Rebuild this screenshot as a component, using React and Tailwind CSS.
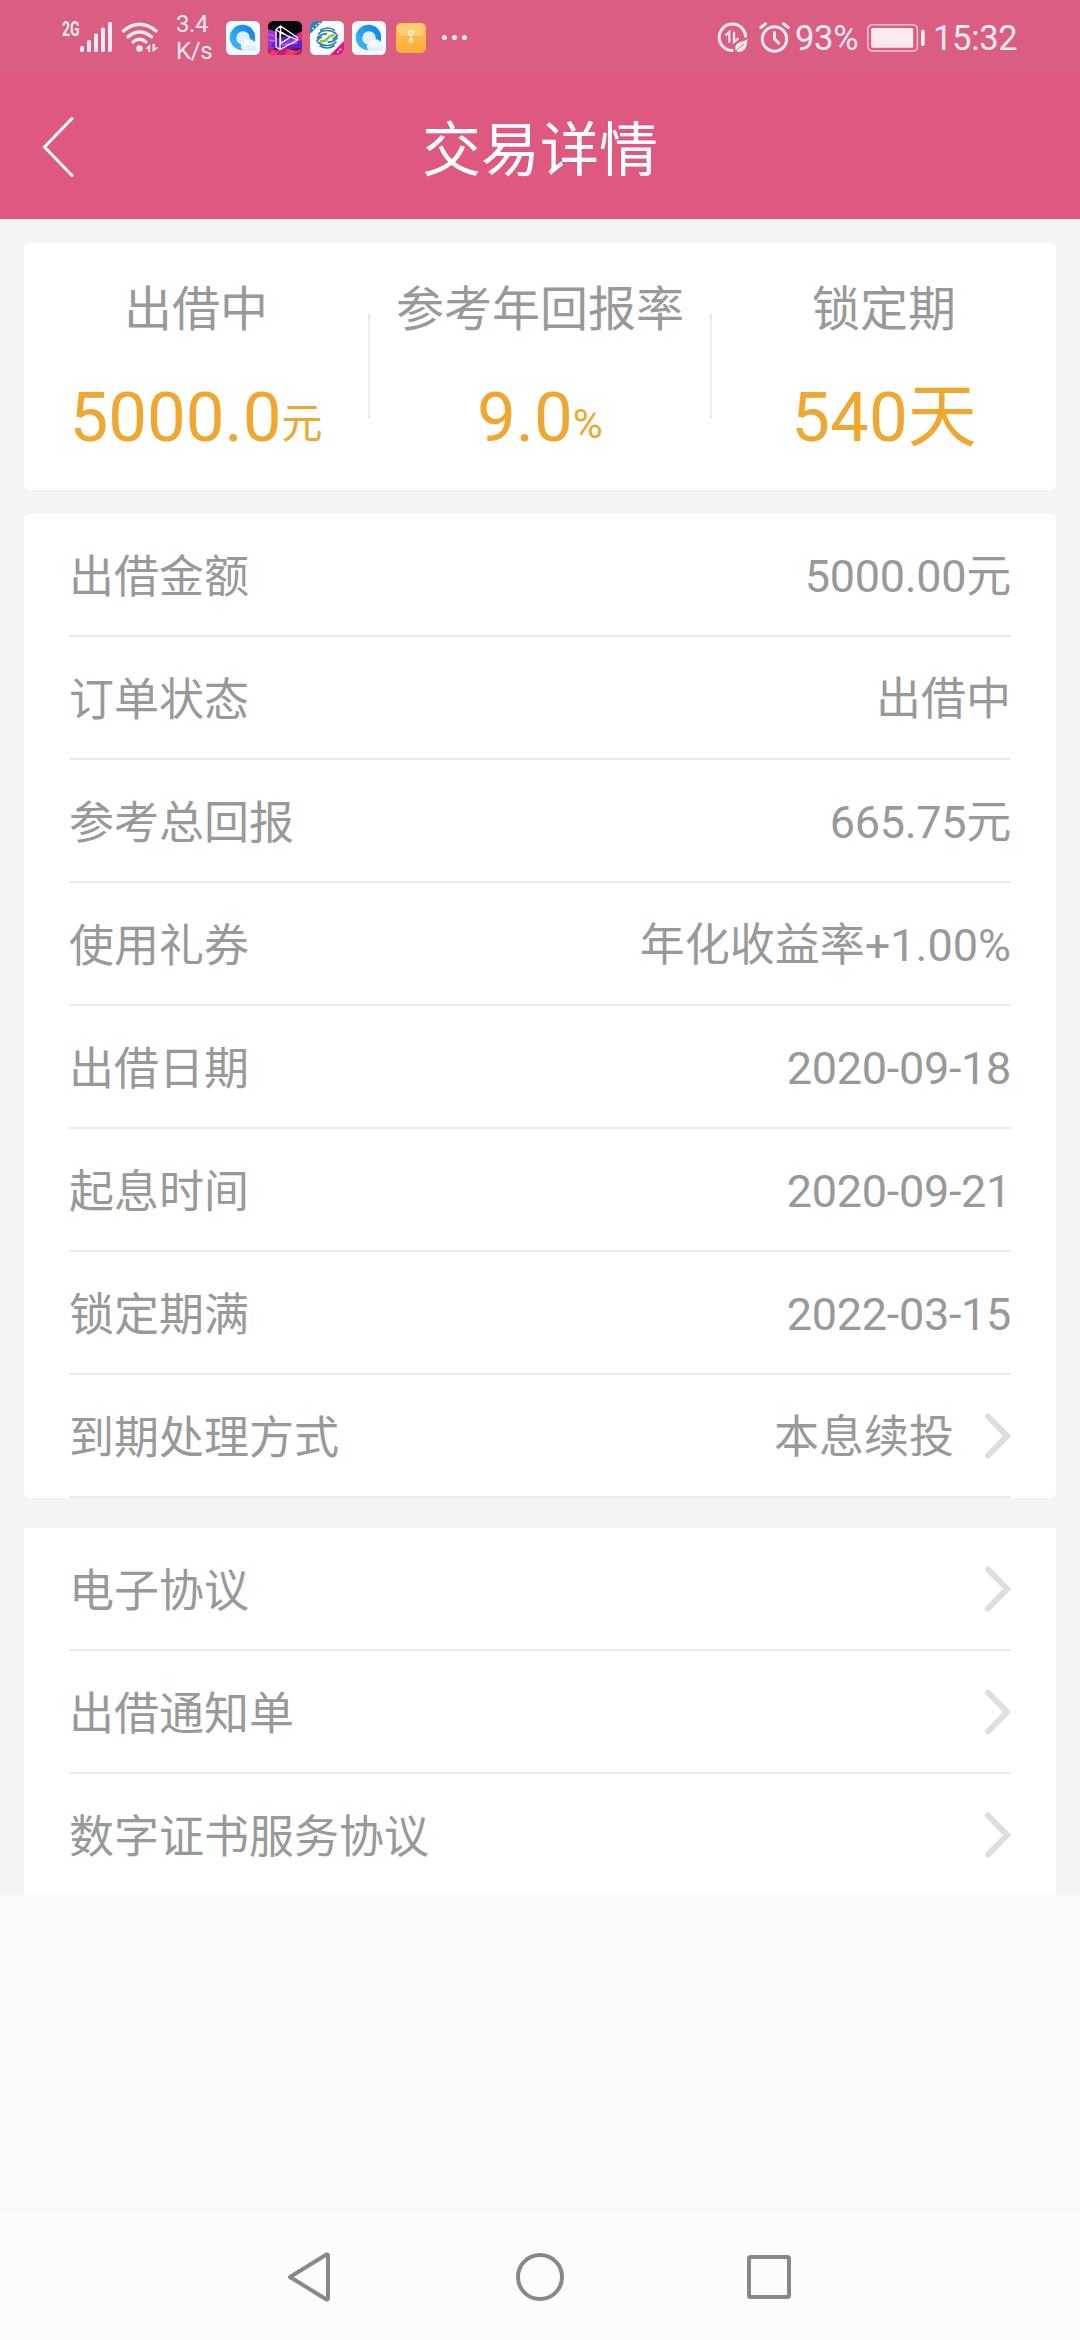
import React from 'react';

const summary = [
    { label: '出借中', value: '5000.0', unit: '元' },
    { label: '参考年回报率', value: '9.0', unit: '%' },
    { label: '锁定期', value: '540天' },
];

const details = [
    { label: '出借金额', value: '5000.00元', numeric: true },
    { label: '订单状态', value: '出借中' },
    { label: '参考总回报', value: '665.75元', numeric: true },
    { label: '使用礼券', value: '年化收益率+1.00%' },
    { label: '出借日期', value: '2020-09-18', numeric: true },
    { label: '起息时间', value: '2020-09-21', numeric: true },
    { label: '锁定期满', value: '2022-03-15', numeric: true },
    { label: '到期处理方式', value: '本息续投', link: true },
];

const documents = ['电子协议', '出借通知单', '数字证书服务协议'];

const SignalIcon = () => (
    <svg className="w-8 h-[30px]" viewBox="0 0 32 30" fill="currentColor">
        <rect x="0" y="24" width="4" height="6" rx="1.6" />
        <rect x="7" y="18" width="4" height="12" rx="1.6" />
        <rect x="14" y="11.5" width="4" height="18.5" rx="1.6" />
        <rect x="21" y="5.5" width="4" height="24.5" rx="1.6" />
        <rect x="28" y="0" width="4" height="30" rx="1.6" />
    </svg>
);

const WifiIcon = () => (
    <svg className="w-[38px] h-[30px]" viewBox="0 0 38 30" fill="none" stroke="currentColor" strokeWidth="3.4" strokeLinecap="round">
        <path d="M2.5 9Q18.5 -4.5 35 9" />
        <path d="M7 14.8Q18.5 5 30.5 14.8" />
        <path d="M12 20Q18.5 14.5 25 20" />
        <circle cx="18.5" cy="26.5" r="3.2" fill="currentColor" stroke="none" />
        <path d="M24.5 26.8L29.2 22V30H27.3V26.8ZM31.5 22V30L37.5 25.5H33.8V22Z" fill="currentColor" stroke="none" />
    </svg>
);

const BrowserIcon = ({ id }) => (
    <svg className="w-[34px] h-[34px]" viewBox="0 0 34 34">
        <defs>
            <linearGradient id={`${id}-ring`} x1="1" y1="0" x2="0" y2="1">
                <stop offset="0" stopColor="#0b7de6" />
                <stop offset="1" stopColor="#3cc0fb" />
            </linearGradient>
            <linearGradient id={`${id}-cloud`} x1="0" y1="0" x2="0" y2="1">
                <stop offset="0" stopColor="#ffffff" />
                <stop offset="1" stopColor="#dcebf8" />
            </linearGradient>
        </defs>
        <rect width="34" height="34" rx="5.5" fill="#f7fafe" />
        <circle cx="16.5" cy="16.5" r="12.7" fill={`url(#${id}-ring)`} />
        <circle cx="17" cy="17" r="6.8" fill="#e2eefa" />
        <path d="M18 29.5a4 4 0 0 1 .6-7.9 5.2 5.2 0 0 1 9.8.3 3.9 3.9 0 0 1-.4 7.6Z" fill={`url(#${id}-cloud)`} />
    </svg>
);

const VideoIcon = () => (
    <svg className="w-[34px] h-[34px]" viewBox="0 0 34 34">
        <defs>
            <clipPath id="video-clip">
                <rect width="34" height="34" rx="5.5" />
            </clipPath>
        </defs>
        <g clipPath="url(#video-clip)">
            <rect width="34" height="34" fill="#08040d" />
            <path d="M0 8L9 11L8 27L0 29Z" fill="#9a35d8" />
            <path d="M8 17L34 13V27L12 30L3 25Z" fill="#5a20d8" />
            <path d="M12 20L27 17L32 20L20 25Z" fill="#8733f2" />
            <path d="M29 13L34 10V20L30 19Z" fill="#e3267f" />
            <path d="M0 26L8 29L17 26L24 31L34 27V34H0Z" fill="#c81e77" />
            <path d="M4 29L10 31L8 34H1ZM20 28L30 30L25 34H17Z" fill="#f03a66" />
            <path d="M0 13L6 15M1 19L7 20M13 24L29 22" stroke="#cb66f7" strokeWidth="1.3" />
        </g>
        <path d="M8 8.5L12.5 5L29.5 16.5V19L12 28.5L8 26ZM8 8.5L12 11.5V28.5M12.5 5V10.5M12 11.5L29.5 19M12.5 10.5L22 16.5L12.5 22.5Z" fill="none" stroke="#fff" strokeWidth="1.3" strokeLinejoin="round" />
    </svg>
);

const CarrierIcon = () => (
    <svg className="w-[34px] h-[34px]" viewBox="0 0 34 34">
        <defs>
            <clipPath id="carrier-clip">
                <rect width="34" height="34" rx="5.5" />
            </clipPath>
        </defs>
        <g clipPath="url(#carrier-clip)">
            <rect width="34" height="34" fill="#fff" />
            <path d="M0 0H13L0 13Z" fill="#2585b5" />
            <path d="M34 20V34H20Z" fill="#e51480" />
            <path d="M2 7.5H4M5 4.5H7M8 2.5H10" stroke="#bfe2f2" strokeWidth="1.5" />
            <path d="M27 31H29M29 28.5H32" stroke="#fbc4df" strokeWidth="1.5" />
        </g>
        {/* Two interlocking striped halves with a green core */}
        <g fill="none" strokeWidth="1.7">
            <path d="M10 9.5Q17 4.5 25 9.5M8 13.5Q11 9.5 17 9.5Q22 9.5 26.5 13M7 17.5Q10 12.8 17 12.8M6.5 20.5Q8.5 17 12 15.8" stroke="#2380af" />
            <path d="M24.500 24.5Q17 29.500 9.500 24.5M26.500 20.5Q23 24.500 17 24.500Q12 24.500 7.500 21M27.500 16.5Q24 21.200 17.500 21.200M27.800 13.500Q26 17 22.500 18.200" stroke="#2380af" />
            <path d="M10 20.2H13Q16 20 18 17Q20 14.200 24.500 14.2" stroke="#8cc63e" strokeWidth="2.6" />
        </g>
    </svg>
);

const EnvelopeIcon = () => (
    <svg className="w-[30px] h-[30px]" viewBox="0 0 30 30">
        <defs>
            <linearGradient id="envelope-body" x1="0" y1="0" x2="0" y2="1">
                <stop offset="0" stopColor="#ffc45a" />
                <stop offset="1" stopColor="#ffad38" />
            </linearGradient>
        </defs>
        <rect width="30" height="30" rx="5" fill="url(#envelope-body)" />
        <path d="M2 3Q2 1 5 1H25Q28 1 28 3V10Q28 13.5 24 13.5H6Q2 13.5 2 10Z" fill="#ffce72" />
        <path d="M2 10Q2 13.5 6 13.5H24Q28 13.5 28 10" fill="none" stroke="#f5ae42" strokeWidth=".8" />
        <circle cx="15" cy="9.7" r="2.3" fill="none" stroke="#fff4dc" strokeWidth="1.5" />
        <path d="M15 12V16" stroke="#fff4dc" strokeWidth="1.2" />
        <circle cx="15" cy="17.5" r="1.6" fill="none" stroke="#fff4dc" strokeWidth="1.2" />
    </svg>
);

const DataSaverIcon = () => (
    <svg className="w-[31px] h-[31px]" viewBox="0 0 31 31" fill="none" stroke="currentColor">
        <path d="M16.5 28.5H15.2A13.2 13.2 0 1 1 28.6 15.5" strokeWidth="3" />
        <path d="M8.5 13.5L12.3 10V20.5M17 9.8V19.8L21.5 16.3" strokeWidth="2.3" />
        <path d="M30.5 17C30 26 27.5 30 21 30C18 29 17.2 25.5 19.5 22.5C22 19.5 26 20 30.5 17Z" fill="currentColor" stroke="none" />
        <path d="M18 30.5Q21.5 25 27 22.5" stroke="#da5d82" strokeWidth=".9" />
    </svg>
);

const AlarmIcon = () => (
    <svg className="w-[31px] h-[31px]" viewBox="0 0 31 31" fill="none" stroke="currentColor" strokeLinecap="round">
        <circle cx="15.5" cy="17" r="12.2" strokeWidth="3" />
        <path d="M1.8 5.5L6.5 1.8M24.5 1.8L29.2 5.5" strokeWidth="3" />
        <path d="M15.5 10.5V16.8L19.8 21.2" strokeWidth="3" />
    </svg>
);

const BatteryIcon = () => (
    <svg className="w-[58px] h-7" viewBox="0 0 58 28" fill="none">
        <rect x=".8" y=".8" width="49.6" height="26.2" rx="4.5" stroke="currentColor" strokeWidth="1.5" opacity=".75" />
        <rect x="4.2" y="4" width="42" height="19.8" rx="1.5" fill="currentColor" />
        <rect x="54" y="5.5" width="3.8" height="16.5" rx="1.9" fill="currentColor" />
    </svg>
);

const Arrow = () => (
    <svg className="w-[26px] h-[46px] ml-[31px]" viewBox="0 0 26 46" fill="none" stroke="#dedede" strokeWidth="6">
        <path d="M3 3.5L22 23L3 42.5" strokeLinecap="round" />
    </svg>
);

const StatusBar = () => (
    <div className="flex items-start h-[74px] bg-[#da5d82] text-[#feeaf0]">
        <span className="w-[18px] ml-[62px] mt-[19px] text-xl leading-5 font-bold origin-left scale-x-[.7]">2G</span>
        <div className="mt-[22px]"><SignalIcon /></div>
        <div className="mt-[22px] ml-[9px]"><WifiIcon /></div>
        <div className="w-[50px] ml-[17px] mt-[11px] text-2xl leading-[27px] tracking-[-0.4px]">
            <div>3.4</div>
            <div>K/s</div>
        </div>
        <div className="flex items-center gap-2 mt-[21px]">
            <BrowserIcon id="browser-a" />
            <VideoIcon />
            <CarrierIcon />
            <BrowserIcon id="browser-b" />
        </div>
        <div className="mt-[23px] ml-[10px]"><EnvelopeIcon /></div>
        <div className="flex gap-[5px] mt-[35px] ml-4">
            <span className="size-[5px] rounded-full bg-current" />
            <span className="size-[5px] rounded-full bg-current" />
            <span className="size-[5px] rounded-full bg-current" />
        </div>
        <div className="flex items-start ml-auto mr-[59px]">
            <div className="mt-[22px]"><DataSaverIcon /></div>
            <div className="mt-[22px] ml-[11px]"><AlarmIcon /></div>
            <span className="w-[62px] ml-[5px] mt-[18px] text-[34.5px] leading-10 tracking-[-0.3px]">93%</span>
            <div className="mt-6 ml-[10px]"><BatteryIcon /></div>
            <span className="w-[88px] ml-2 mt-[18px] text-[34.5px] leading-10 tracking-[-0.3px]">15:32</span>
        </div>
    </div>
);

const Header = () => (
    <header className="flex items-center justify-between h-[145px] bg-[#df587f] text-white">
        <button className="w-[120px] pl-[42px]">
            <svg className="w-8 h-[62px]" viewBox="0 0 32 62" fill="none" stroke="currentColor" strokeWidth="3" strokeLinecap="round">
                <path d="M30 2.5L2.5 31L30 59.5" />
            </svg>
        </button>
        <h1 className="text-[59px] leading-[72px] pt-[9px]">交易详情</h1>
        <div className="w-[120px]" />
    </header>
);

const Row = ({ label, value, numeric, link, last }) => (
    <div className={`flex items-center text-[45px] leading-[60px] ${last ? 'h-[121px]' : 'h-[123px] border-b-2 border-[#ebebeb]'}`}>
        <span className="pt-1.5">{label}</span>
        <span className={`ml-auto ${numeric ? 'pt-1 tracking-[-0.3px]' : 'pt-[5px]'}`}>{value}</span>
        {link && <Arrow />}
    </div>
);

const App = () => {
    return (
        <div className="flex flex-col w-[1080px] h-[2340px] overflow-hidden bg-[#fafafa] font-[Roboto,'Noto_Sans_CJK_SC',sans-serif] text-[#999]">
            <StatusBar />
            <Header />

            <main className="px-6 pt-6 bg-[#f4f4f4]">
                {/* Summary */}
                <section className="grid grid-cols-3 h-[247px] bg-white rounded-md">
                    {summary.map((item, index) => (
                        <div key={item.label} className="relative pt-[37px] text-center">
                            <div className="text-5xl leading-[60px]">{item.label}</div>
                            <div className="mt-9 text-[69px] leading-[84px] text-[#efa72f]">
                                {item.value}
                                {item.unit && <span className="text-[41px] leading-none align-[3px]">{item.unit}</span>}
                            </div>
                            {index === 1 && (
                                <div className="absolute inset-x-0 top-[71px] h-[105px] border-x-2 border-[#ebebeb]" />
                            )}
                        </div>
                    ))}
                </section>

                {/* Order details */}
                <section className="mt-6 px-[45px] bg-white rounded-md">
                    {details.map((item) => (
                        <Row key={item.label} {...item} />
                    ))}
                </section>

                {/* Agreements */}
                <section className="mt-[30px] px-[45px] bg-white">
                    {documents.map((label, index) => (
                        <Row key={label} label={label} link last={index === documents.length - 1} />
                    ))}
                </section>
            </main>

            {/* System navigation */}
            <nav className="flex items-center justify-center h-[126px] mt-auto bg-[#fcfcfc] text-[#888]">
                <svg className="w-[504px] h-[50px]" viewBox="0 0 504 50" fill="none" stroke="currentColor" strokeWidth="4" strokeLinejoin="round">
                    <path d="M2 25L38.5 2.5Q40 2 40 4V46Q40 48 38.5 47.5Z" />
                    <circle cx="252" cy="25" r="22" />
                    <rect x="461" y="5" width="40" height="40" rx="1.5" />
                </svg>
            </nav>
        </div>
    );
};

export default App;
